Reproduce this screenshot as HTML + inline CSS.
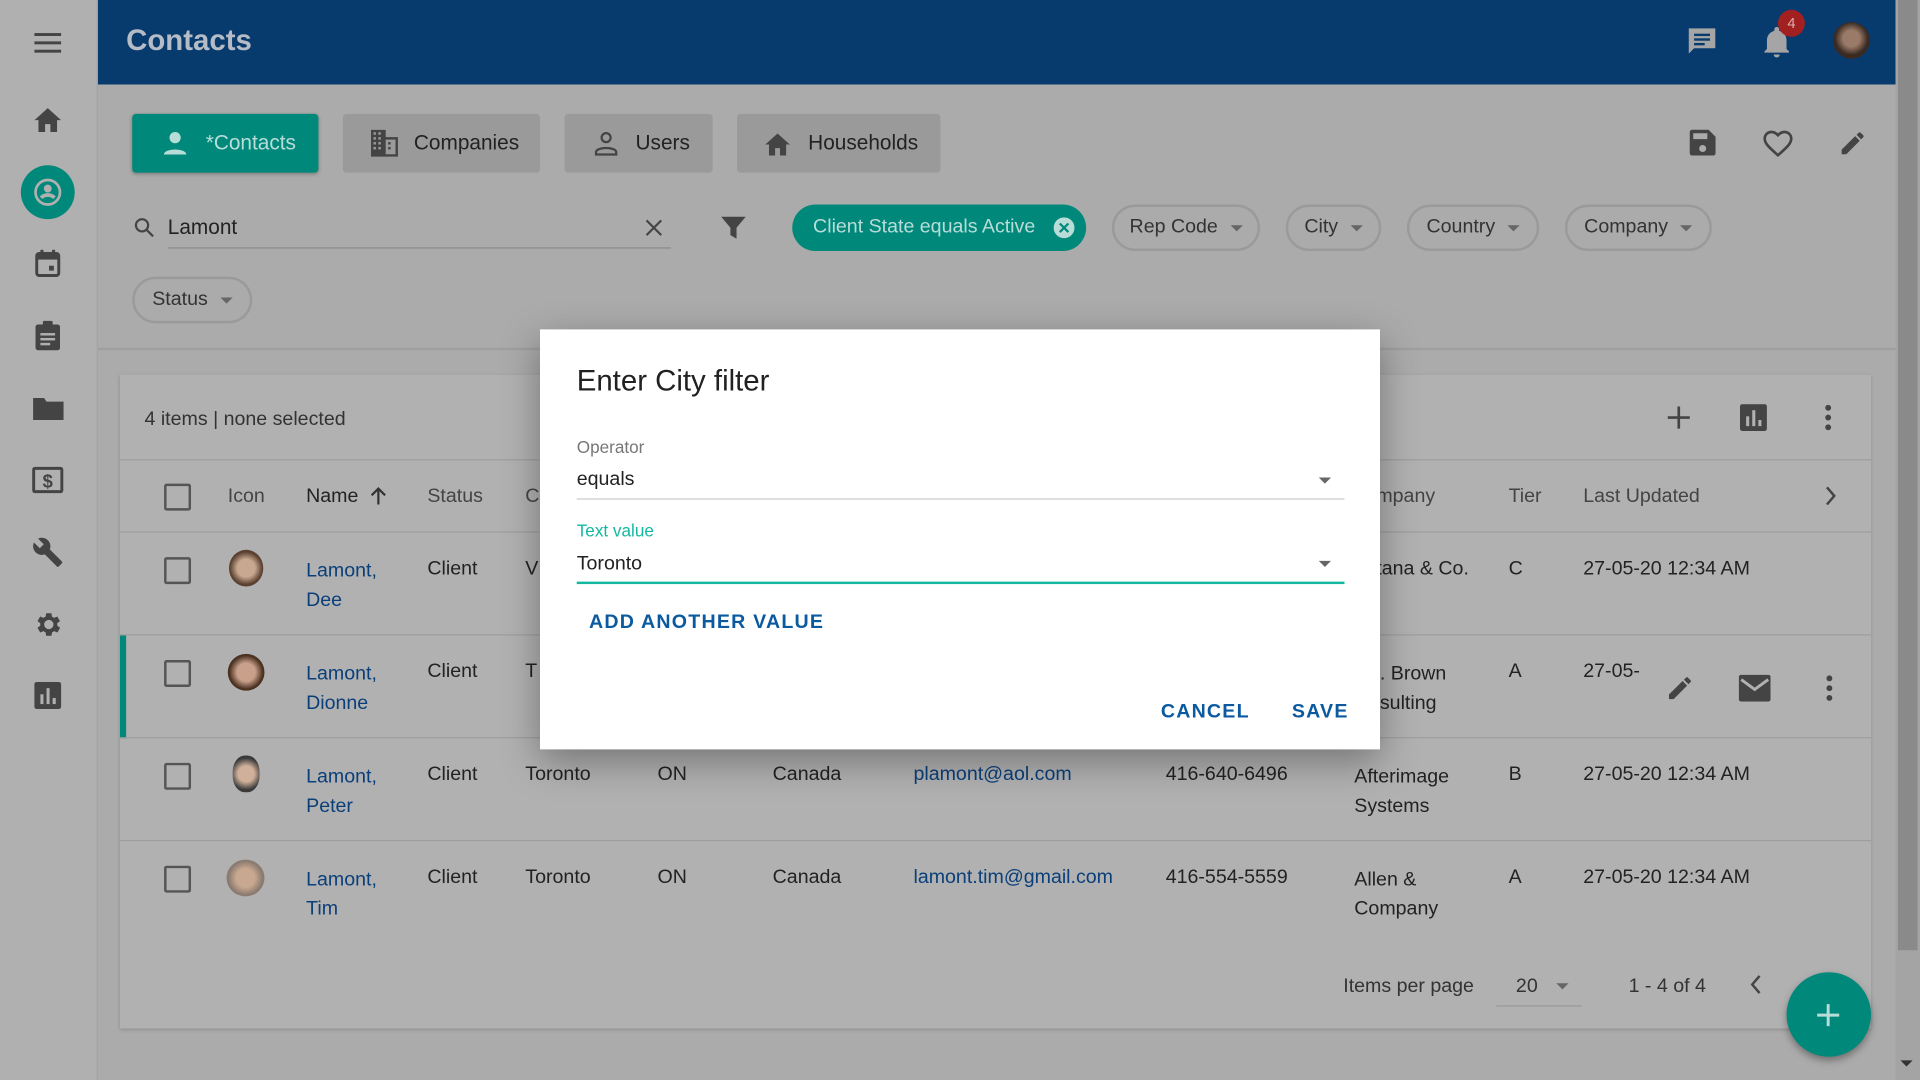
<!DOCTYPE html>
<html><head><meta charset="utf-8"><style>
html,body{margin:0;padding:0;width:1920px;height:1080px;overflow:hidden;background:#aaa}
#s{position:absolute;left:0;top:0;width:1568px;height:882px;transform:scale(1.22449);transform-origin:0 0;background:#ababab;font-family:"Liberation Sans",sans-serif;color:#222;font-size:16px}
.a{position:absolute;white-space:nowrap}
.side{left:0;top:0;width:79px;height:882px;background:#b0b0b0;border-right:1px solid #a4a4a4}
.hdr{left:80px;top:0;width:1468px;height:69px;background:#073a6d}
.tab{top:93px;height:48px;border-radius:3px;background:#9a9a9a;display:flex;align-items:center;font-size:17px;color:#222}
.chip{top:167px;height:38px;border:2px solid #9a9a9a;border-radius:20px;box-sizing:border-box;display:flex;align-items:center;justify-content:center;font-size:16px;color:#333;white-space:nowrap}
.chip:after{content:"";border:5px solid transparent;border-top-color:#666;margin:5px 0 0 10px}
.card{left:98px;top:306px;width:1430px;height:534px;background:#b1b1b1;box-shadow:0 1px 3px rgba(0,0,0,.2)}
.hl{position:absolute;left:0;width:1430px;height:1px;background:#9e9e9e}
.cb{position:absolute;width:18px;height:18px;border:2px solid #555;border-radius:2px}
.lnk{color:#0a3f7a}
.dlg{left:441px;top:269px;width:686px;height:343px;background:#fff;box-shadow:0 10px 30px rgba(0,0,0,.35)}
svg{position:absolute}
.btn{font-size:16px;color:#0b5aa0;letter-spacing:1px;font-weight:bold}
</style></head><body><div id="s">
<div class="a side"></div>
<svg style="left:28px;top:26px" width="22" height="18"><rect y="1" width="22" height="2.4" fill="#444"/><rect y="7.8" width="22" height="2.4" fill="#444"/><rect y="14.6" width="22" height="2.4" fill="#444"/></svg>
<svg style="left:26px;top:85px" width="26" height="24" viewBox="0 0 24 22"><path d="M10 21v-6h4v6h5v-9h3L12 3 2 12h3v9z" fill="#444"/></svg>
<div class="a" style="left:17px;top:135px;width:44px;height:44px;border-radius:50%;background:#00897b"></div>
<svg style="left:27px;top:145px" width="24" height="24" viewBox="0 0 24 24"><circle cx="12" cy="12" r="10" fill="none" stroke="#b0b0b0" stroke-width="2.2"/><circle cx="12" cy="9" r="3.2" fill="#b0b0b0"/><path d="M6.5 16.5c3-3 8-3 11 0" stroke="#b0b0b0" stroke-width="3" fill="none"/></svg>
<svg style="left:28px;top:203px" width="22" height="24" viewBox="0 0 22 24"><rect x="2" y="4" width="18" height="18" rx="2" fill="none" stroke="#444" stroke-width="2.4"/><rect x="2" y="4" width="18" height="5" fill="#444"/><rect x="5" y="1" width="2.5" height="5" fill="#444"/><rect x="14.5" y="1" width="2.5" height="5" fill="#444"/><rect x="12" y="14" width="4" height="4" fill="#444"/></svg>
<svg style="left:28px;top:261px" width="22" height="26" viewBox="0 0 22 26"><rect x="1" y="4" width="20" height="21" rx="2" fill="#444"/><rect x="7" y="1" width="8" height="5" rx="1" fill="#444"/><rect x="5" y="11" width="12" height="2" fill="#b0b0b0"/><rect x="5" y="15" width="12" height="2" fill="#b0b0b0"/><rect x="5" y="19" width="8" height="2" fill="#b0b0b0"/></svg>
<svg style="left:27px;top:323px" width="25" height="20" viewBox="0 0 25 20"><path d="M0 2h9l2 3h14v15H0z" fill="#444"/></svg>
<svg style="left:26px;top:381px" width="26" height="22" viewBox="0 0 26 22"><rect x="1.5" y="1.5" width="23" height="19" rx="1" fill="none" stroke="#444" stroke-width="2.4"/><text x="13" y="17" font-size="15" font-weight="bold" text-anchor="middle" fill="#444" font-family="Liberation Sans">$</text></svg>
<svg style="left:26px;top:438px" width="26" height="26" viewBox="0 0 24 24"><path d="M22.7 19l-9.1-9.1c.9-2.3.4-5-1.5-6.9-2-2-5-2.4-7.4-1.3L9 6 6 9 1.6 4.7C.4 7.1.9 10.1 2.9 12.1c1.9 1.9 4.6 2.4 6.9 1.5l9.1 9.1c.4.4 1 .4 1.4 0l2.3-2.3c.5-.4.5-1.1.1-1.4z" fill="#444"/></svg>
<svg style="left:26px;top:497px" width="26" height="26" viewBox="0 0 24 24"><path d="M19.1 12.9a7 7 0 000-1.8l2.1-1.6-2-3.5-2.5 1a7 7 0 00-1.6-.9L14.8 3.5h-4l-.4 2.6a7 7 0 00-1.6.9l-2.5-1-2 3.5 2.1 1.6a7 7 0 000 1.8l-2.1 1.6 2 3.5 2.5-1c.5.4 1 .7 1.6.9l.4 2.6h4l.4-2.6c.6-.2 1.1-.5 1.6-.9l2.5 1 2-3.5zM12.8 15.5a3.5 3.5 0 110-7 3.5 3.5 0 010 7z" fill="#444"/></svg>
<svg style="left:28px;top:557px" width="22" height="22" viewBox="0 0 22 22"><rect width="22" height="22" rx="2" fill="#444"/><rect x="5" y="10" width="2.5" height="8" fill="#b0b0b0"/><rect x="10" y="5" width="2.5" height="13" fill="#b0b0b0"/><rect x="15" y="13" width="2.5" height="5" fill="#b0b0b0"/></svg>

<div class="a hdr"></div>
<div class="a" style="left:103px;top:20px;font-size:24px;font-weight:bold;color:#b5bcc6">Contacts</div>
<svg style="left:1377px;top:22px" width="26" height="24" viewBox="0 0 24 22"><path d="M2 1h20v15H6l-4 4z" fill="#a5a5a5"/><rect x="6" y="5" width="12" height="1.8" fill="#073a6d"/><rect x="6" y="8.5" width="12" height="1.8" fill="#073a6d"/><rect x="6" y="12" width="8" height="1.8" fill="#073a6d"/></svg>
<svg style="left:1439px;top:22px" width="24" height="26" viewBox="0 0 24 26"><path d="M12 25a2.5 2.5 0 002.5-2.5h-5A2.5 2.5 0 0012 25zM20 18v-7c0-4-2.5-7-6-7.8V2a2 2 0 00-4 0v1.2C6.5 4 4 7 4 11v7l-2 2v1h20v-1z" fill="#a5a5a5"/></svg>
<div class="a" style="left:1452px;top:8px;width:22px;height:22px;border-radius:50%;background:#a32020;color:#d9b0b0;font-size:12px;text-align:center;line-height:22px">4</div>
<div class="a" style="left:1497px;top:18px;width:30px;height:30px;border-radius:50%;background:radial-gradient(circle at 50% 45%,#9a7a68 30%,#3a2a22 60%)"></div>

<div class="a tab" style="left:108px;width:152px;background:#00897b;color:#b8ddd8;box-shadow:0 1px 3px rgba(0,0,0,.3)"><svg style="position:static;margin:0 14px 0 24px" width="22" height="22" viewBox="0 0 24 24"><circle cx="12" cy="7" r="5" fill="#b8ddd8"/><path d="M2 22c0-6 20-6 20 0z" fill="#b8ddd8"/></svg>*Contacts</div>
<div class="a tab" style="left:280px;width:161px"><svg style="position:static;margin:0 12px 0 22px" width="24" height="22" viewBox="0 0 24 22"><path d="M1 0h12v6h10v16H1z" fill="#444"/><g fill="#9a9a9a"><rect x="3" y="2" width="2" height="2"/><rect x="7" y="2" width="2" height="2"/><rect x="3" y="6" width="2" height="2"/><rect x="7" y="6" width="2" height="2"/><rect x="3" y="10" width="2" height="2"/><rect x="7" y="10" width="2" height="2"/><rect x="3" y="14" width="2" height="2"/><rect x="7" y="14" width="2" height="2"/><rect x="13" y="8" width="8" height="12"/></g><g fill="#444"><rect x="15" y="10" width="2" height="2"/><rect x="15" y="14" width="2" height="2"/></g></svg>Companies</div>
<div class="a tab" style="left:461px;width:121px"><svg style="position:static;margin:0 12px 0 22px" width="24" height="22" viewBox="0 0 24 24"><circle cx="12" cy="7" r="4" fill="none" stroke="#444" stroke-width="2"/><path d="M3 22v-2c0-5 18-5 18 0v2z" fill="none" stroke="#444" stroke-width="2"/></svg>Users</div>
<div class="a tab" style="left:602px;width:166px"><svg style="position:static;margin:0 12px 0 20px" width="26" height="22" viewBox="0 0 24 22"><path d="M10 21v-6h4v6h5v-9h3L12 3 2 12h3v9z" fill="#444"/></svg>Households</div>
<svg style="left:1379px;top:105px" width="23" height="23" viewBox="0 0 24 24"><path d="M17 1H3a2 2 0 00-2 2v18a2 2 0 002 2h18a2 2 0 002-2V7zM12 20a3 3 0 110-6 3 3 0 010 6zM16 9H4V4h12z" fill="#444"/></svg>
<svg style="left:1439px;top:105px" width="26" height="24" viewBox="0 0 24 22"><path d="M12 20l-1.5-1.3C5 13.8 2 11 2 7.5 2 4.7 4.2 2.5 7 2.5c1.9 0 3.7 1 5 2.4 1.3-1.4 3.1-2.4 5-2.4 2.8 0 5 2.2 5 5 0 3.5-3 6.3-8.5 11.2z" fill="none" stroke="#444" stroke-width="2"/></svg>
<svg style="left:1501px;top:105px" width="24" height="24" viewBox="0 0 24 24"><path d="M3 17.2V21h3.8L17.8 9.9l-3.7-3.7zM20.7 7c.4-.4.4-1 0-1.4l-2.3-2.3a1 1 0 00-1.4 0l-1.8 1.8 3.7 3.7z" fill="#444"/></svg>

<svg style="left:109px;top:177px" width="18" height="18" viewBox="0 0 18 18"><circle cx="7" cy="7" r="5" fill="none" stroke="#444" stroke-width="1.8"/><path d="M11 11l5 5" stroke="#444" stroke-width="1.8"/></svg>
<div class="a" style="left:137px;top:176px;font-size:17px;color:#222">Lamont</div>
<div class="a" style="left:137px;top:202px;width:411px;height:1px;background:#8a8a8a"></div>
<svg style="left:527px;top:179px" width="14" height="14"><path d="M1 1l12 12M13 1L1 13" stroke="#444" stroke-width="1.8"/></svg>
<svg style="left:588px;top:175px" width="22" height="22" viewBox="0 0 22 22"><path d="M1 2h20l-7.5 9v9l-5-3v-6z" fill="#444"/></svg>
<div class="a" style="left:647px;top:167px;width:240px;height:38px;border-radius:20px;background:#00897b;color:#b8ddd8;font-size:16px;line-height:38px;padding-left:17px;box-sizing:border-box">Client State equals Active</div>
<svg style="left:860px;top:177px" width="18" height="18"><circle cx="9" cy="9" r="8.5" fill="#b8ddd8"/><path d="M5.5 5.5l7 7M12.5 5.5l-7 7" stroke="#00897b" stroke-width="1.8"/></svg>
<div class="a chip" style="left:908px;width:121px">Rep Code</div>
<div class="a chip" style="left:1050px;width:78px">City</div>
<div class="a chip" style="left:1149px;width:108px">Country</div>
<div class="a chip" style="left:1278px;width:120px">Company</div>
<div class="a chip" style="left:108px;top:226px;width:98px">Status</div>
<div class="a" style="left:80px;top:284px;width:1468px;height:2px;background:#9f9f9f"></div>

<div class="a card">
<div class="a" style="left:20px;top:28px;color:#333">4 items | none selected</div>
<svg style="left:1263px;top:25px" width="20" height="20"><path d="M10 1v18M1 10h18" stroke="#444" stroke-width="2.2"/></svg>
<svg style="left:1323px;top:24px" width="22" height="22" viewBox="0 0 22 22"><rect width="22" height="22" rx="2" fill="#444"/><rect x="5" y="10" width="2.5" height="8" fill="#b1b1b1"/><rect x="10" y="5" width="2.5" height="13" fill="#b1b1b1"/><rect x="15" y="13" width="2.5" height="5" fill="#b1b1b1"/></svg>
<svg style="left:1392px;top:24px" width="6" height="22"><circle cx="3" cy="3" r="2.4" fill="#444"/><circle cx="3" cy="11" r="2.4" fill="#444"/><circle cx="3" cy="19" r="2.4" fill="#444"/></svg>
<div class="hl" style="top:69px"></div>
<div class="cb" style="left:36px;top:89px"></div>
<div class="a" style="left:88px;top:91px;color:#444">Icon</div>
<div class="a" style="left:152px;top:91px;color:#222">Name</div>
<svg style="left:204px;top:91px" width="14" height="16"><path d="M7 15V2M1.5 7.5L7 2l5.5 5.5" stroke="#333" stroke-width="1.8" fill="none"/></svg>
<div class="a" style="left:251px;top:91px;color:#444">Status</div>
<div class="a" style="left:331px;top:91px;color:#444">C</div>
<div class="a" style="left:1026px;top:91px;color:#444">mpany</div>
<div class="a" style="left:1134px;top:91px;color:#444">Tier</div>
<div class="a" style="left:1195px;top:91px;color:#444">Last Updated</div>
<svg style="left:1392px;top:91px" width="10" height="16"><path d="M2 1l6 7-6 7" stroke="#444" stroke-width="2" fill="none"/></svg>
<div class="hl" style="top:128px"></div>
<div class="cb" style="left:36px;top:149px"></div>
<div class="a" style="left:89px;top:143px;width:28px;height:30px;border-radius:50%;background:radial-gradient(circle at 50% 50%,#c9a890 35%,#5a4030 65%)"></div>
<div class="a lnk" style="left:152px;top:149px;line-height:24px">Lamont,<br>Dee</div>
<div class="a" style="left:251px;top:150px">Client</div><div class="a" style="left:331px;top:150px">V</div>
<div class="a" style="left:1026px;top:150px">tana &amp; Co.</div><div class="a" style="left:1134px;top:150px">C</div><div class="a" style="left:1195px;top:150px">27-05-20 12:34 AM</div>
<div class="hl" style="top:212px"></div>
<div class="a" style="left:0;top:213px;width:5px;height:84px;background:#00897b"></div>
<div class="cb" style="left:36px;top:233px"></div>
<div class="a" style="left:88px;top:228px;width:30px;height:30px;border-radius:50%;background:radial-gradient(circle at 50% 50%,#c9a08a 35%,#4a3020 65%)"></div>
<div class="a lnk" style="left:152px;top:233px;line-height:24px">Lamont,<br>Dionne</div>
<div class="a" style="left:251px;top:234px">Client</div><div class="a" style="left:331px;top:234px">T</div>
<div class="a" style="left:1020px;top:233px;line-height:24px">L. Brown<br>nsulting</div><div class="a" style="left:1134px;top:234px">A</div><div class="a" style="left:1195px;top:234px">27-05-</div>
<svg style="left:1262px;top:244px" width="24" height="24" viewBox="0 0 24 24"><path d="M3 17.2V21h3.8L17.8 9.9l-3.7-3.7zM20.7 7c.4-.4.4-1 0-1.4l-2.3-2.3a1 1 0 00-1.4 0l-1.8 1.8 3.7 3.7z" fill="#444"/></svg>
<svg style="left:1322px;top:245px" width="26" height="22" viewBox="0 0 26 22"><rect width="26" height="22" rx="2" fill="#444"/><path d="M2 4l11 8 11-8" stroke="#b1b1b1" stroke-width="2.4" fill="none"/></svg>
<svg style="left:1393px;top:245px" width="6" height="22"><circle cx="3" cy="3" r="2.4" fill="#444"/><circle cx="3" cy="11" r="2.4" fill="#444"/><circle cx="3" cy="19" r="2.4" fill="#444"/></svg>
<div class="hl" style="top:296px"></div>
<div class="cb" style="left:36px;top:317px"></div>
<div class="a" style="left:92px;top:311px;width:22px;height:30px;border-radius:45%;background:radial-gradient(circle at 50% 50%,#d0b09a 35%,#3a3a3a 70%)"></div>
<div class="a lnk" style="left:152px;top:317px;line-height:24px">Lamont,<br>Peter</div>
<div class="a" style="left:251px;top:318px">Client</div><div class="a" style="left:331px;top:318px">Toronto</div><div class="a" style="left:439px;top:318px">ON</div><div class="a" style="left:533px;top:318px">Canada</div>
<div class="a lnk" style="left:648px;top:318px">plamont@aol.com</div><div class="a" style="left:854px;top:318px">416-640-6496</div>
<div class="a" style="left:1008px;top:317px;line-height:24px">Afterimage<br>Systems</div><div class="a" style="left:1134px;top:318px">B</div><div class="a" style="left:1195px;top:318px">27-05-20 12:34 AM</div>
<div class="hl" style="top:380px"></div>
<div class="cb" style="left:36px;top:401px"></div>
<div class="a" style="left:87px;top:396px;width:31px;height:30px;border-radius:50%;background:radial-gradient(circle at 50% 50%,#c8a890 35%,#8a7a70 65%)"></div>
<div class="a lnk" style="left:152px;top:401px;line-height:24px">Lamont,<br>Tim</div>
<div class="a" style="left:251px;top:402px">Client</div><div class="a" style="left:331px;top:402px">Toronto</div><div class="a" style="left:439px;top:402px">ON</div><div class="a" style="left:533px;top:402px">Canada</div>
<div class="a lnk" style="left:648px;top:402px">lamont.tim@gmail.com</div><div class="a" style="left:854px;top:402px">416-554-5559</div>
<div class="a" style="left:1008px;top:401px;line-height:24px">Allen &amp;<br>Company</div><div class="a" style="left:1134px;top:402px">A</div><div class="a" style="left:1195px;top:402px">27-05-20 12:34 AM</div>
<div class="a" style="left:999px;top:491px;color:#333">Items per page</div>
<div class="a" style="left:1140px;top:491px;color:#333">20</div>
<div class="a" style="left:1173px;top:497px;border:5px solid transparent;border-top-color:#666"></div>
<div class="a" style="left:1124px;top:515px;width:70px;height:1px;background:#999"></div>
<div class="a" style="left:1232px;top:491px;color:#333">1 - 4 of 4</div>
<svg style="left:1331px;top:490px" width="10" height="16"><path d="M8 1L2 8l6 7" stroke="#444" stroke-width="2" fill="none"/></svg>
</div>
<div class="a" style="left:1459px;top:794px;width:69px;height:69px;border-radius:50%;background:#00897b;box-shadow:0 3px 6px rgba(0,0,0,.35)"></div>
<svg style="left:1483px;top:819px" width="20" height="20"><path d="M10 1v18M1 10h18" stroke="#b8ddd8" stroke-width="2.4"/></svg>
<div class="a" style="left:1548px;top:0;width:20px;height:882px;background:#a4a4a4"></div>
<div class="a" style="left:1550px;top:0;width:16px;height:776px;background:#8a8a8a"></div>
<div class="a" style="left:1552px;top:866px;border:5px solid transparent;border-top-color:#333"></div>

<div class="a dlg">
<div class="a" style="left:30px;top:29px;font-size:24px;color:#212121">Enter City filter</div>
<div class="a" style="left:30px;top:88px;font-size:14px;color:#777">Operator</div>
<div class="a" style="left:30px;top:114px;font-size:16px;color:#222">equals</div>
<div class="a" style="left:636px;top:121px;border:5px solid transparent;border-top-color:#666"></div>
<div class="a" style="left:30px;top:138px;width:627px;height:1px;background:#ccc"></div>
<div class="a" style="left:30px;top:156px;font-size:14px;color:#14b8a0">Text value</div>
<div class="a" style="left:30px;top:183px;font-size:16px;color:#222">Toronto</div>
<div class="a" style="left:636px;top:189px;border:5px solid transparent;border-top-color:#666"></div>
<div class="a" style="left:30px;top:206px;width:627px;height:2px;background:#14b8a0"></div>
<div class="a btn" style="left:40px;top:231px">ADD ANOTHER VALUE</div>
<div class="a btn" style="left:507px;top:304px">CANCEL</div>
<div class="a btn" style="left:614px;top:304px">SAVE</div>
</div>
</div></body></html>
